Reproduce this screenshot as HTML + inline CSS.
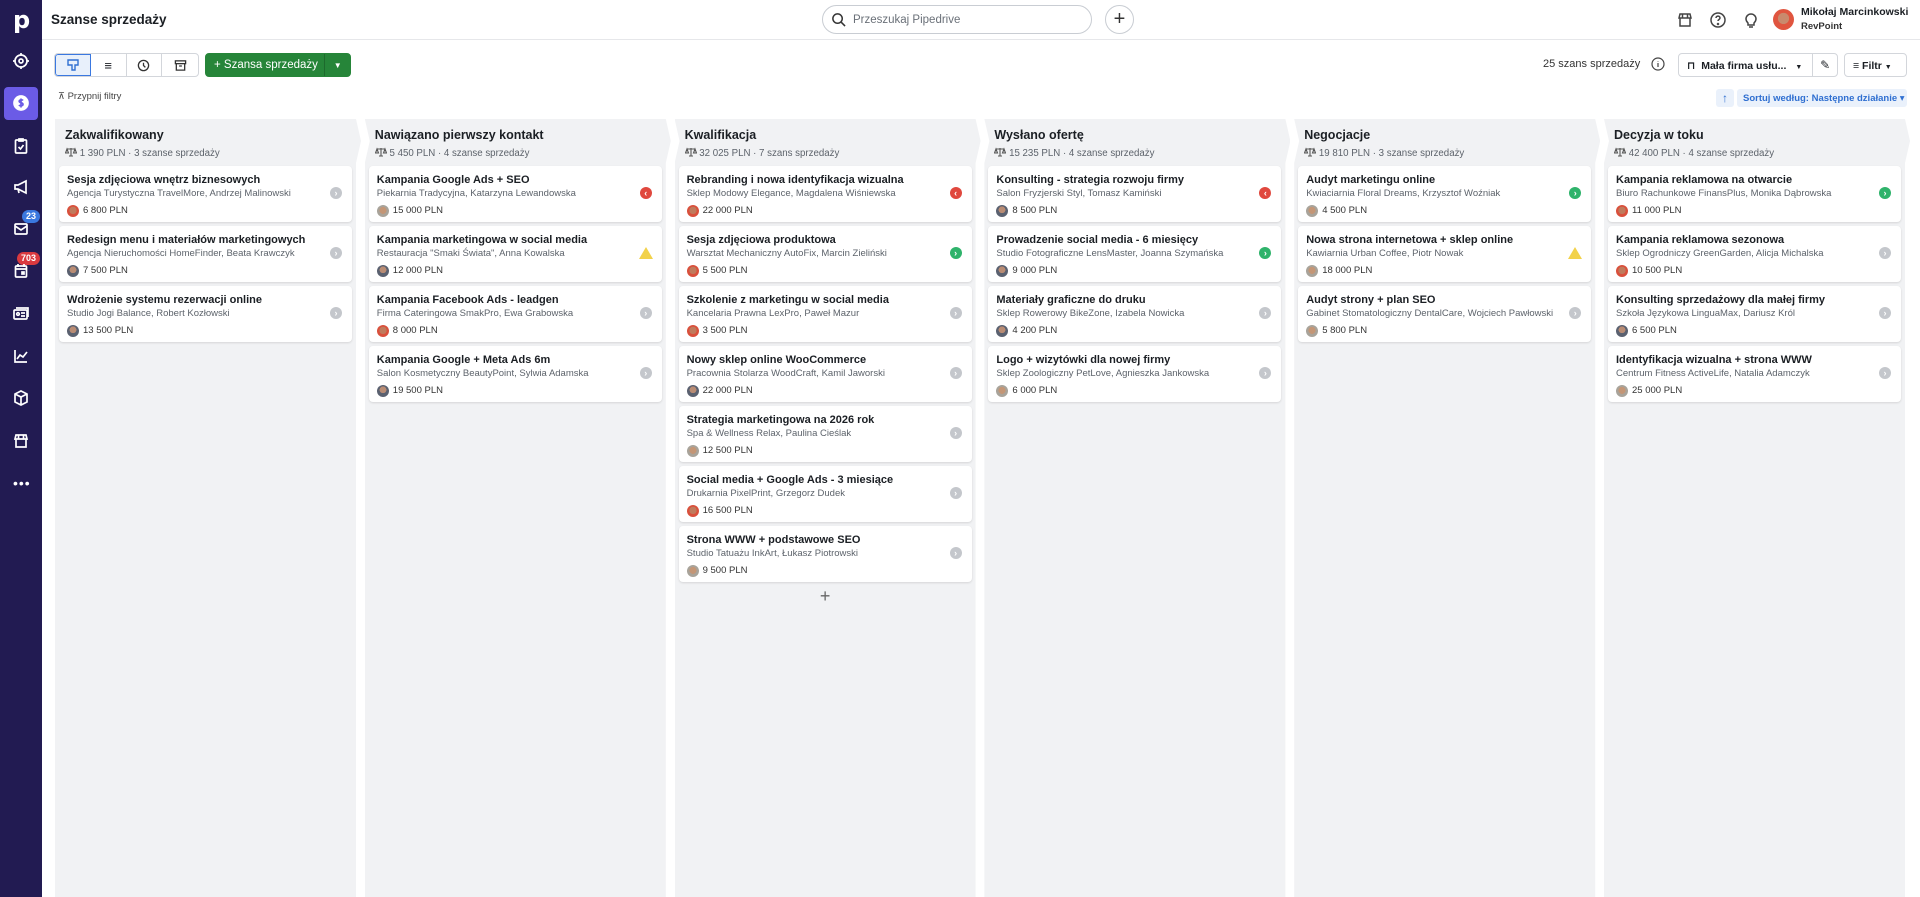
<!DOCTYPE html>
<html><head><meta charset="utf-8">
<style>
*{box-sizing:border-box;margin:0;padding:0}
body{width:1920px;height:897px;overflow:hidden;background:#fff;font-family:"Liberation Sans","DejaVu Sans",sans-serif;color:#1b1f24;position:relative}
.side{position:absolute;left:0;top:0;width:42px;height:897px;background:#221b52}
.si{position:absolute;left:0;width:42px;display:flex;justify-content:center;align-items:center;height:30px}
.si svg{width:18px;height:18px;stroke:#fff;fill:none;stroke-width:1.7}
.active{position:absolute;left:4px;top:87px;width:34px;height:33px;background:#6b5be6;border-radius:4px}
.badge{position:absolute;color:#fff;font-size:9px;font-weight:bold;border-radius:8px;padding:1px 4px;line-height:11px}
.top{position:absolute;left:42px;top:0;right:0;height:40px;border-bottom:1px solid #e6e7ea}
.title{position:absolute;left:51px;top:12px;font-size:13.5px;font-weight:bold;color:#1b1f24}
.search{position:absolute;left:822px;top:5px;width:270px;height:29px;border:1px solid #c9cdd3;border-radius:15px;font-size:11.5px;color:#6a7078;padding:8px 0 0 30px}
.plus{position:absolute;left:1105px;top:5px;width:29px;height:29px;border:1px solid #c9cdd3;border-radius:50%;text-align:center;font-size:20px;line-height:26px;color:#333}
.btn{position:absolute;border:1px solid #d3d6db;border-radius:4px;height:24px;top:53px;background:#fff;font-size:11px;white-space:nowrap}
.card{background:#fff;border-radius:4px;height:56px;margin-bottom:4px;position:relative;box-shadow:0 1px 2px rgba(0,0,0,.12);padding:7px 0 0 8px}
.card .t{font-size:11px;font-weight:bold;color:#1b1f24;white-space:nowrap;line-height:14px}
.card .s{font-size:9.5px;color:#5d636b;white-space:nowrap;margin-top:1px;line-height:12px}
.card .p{font-size:9.5px;color:#333;margin-top:5px;display:flex;align-items:center;line-height:12px}
.av{width:12px;height:12px;border-radius:50%;margin-right:4px;display:inline-block}
.st{position:absolute;right:10px;top:21px;width:12px;height:12px;border-radius:50%;color:#fff;font-size:9px;line-height:12px;text-align:center;font-weight:bold}
.g{background:#c4c7cc}.r{background:#e0483e}.gr{background:#2fb36b}
.tri{position:absolute;right:9px;top:21px;width:0;height:0;border-left:7px solid transparent;border-right:7px solid transparent;border-bottom:12px solid #f2d24b}
.col{position:absolute;top:119px;width:306px;height:778px;background:#f1f2f4}
.col h2{position:absolute;left:10px;top:9px;font-size:12.5px;font-weight:bold;color:#1b1f24}
.col .sum{position:absolute;left:10px;top:28px;font-size:9.7px;color:#5d636b}
.cards{position:absolute;left:4px;top:47px;width:293px}
.addc{text-align:center;font-size:18px;color:#666;margin-top:2px}
</style></head><body>
<div class="side">
 <div style="position:absolute;left:13px;top:6px;color:#fff;font-size:24px;font-weight:bold;font-family:'DejaVu Sans',sans-serif">p</div>
 <div class="si" style="top:46px"><svg viewBox="0 0 18 18"><circle cx="9" cy="9" r="6"/><circle cx="9" cy="9" r="2"/><path d="M9 1v2M9 15v2M1 9h2M15 9h2"/></svg></div>
 <div class="active"></div>
 <div class="si" style="top:88px"><svg viewBox="0 0 18 18"><circle cx="9" cy="9" r="7" fill="#fff" stroke="#fff"/><path d="M11 6.5c-.5-.8-3.8-1-3.8.8s3.8 1 3.8 3-3.3 1.8-4 .7M9 4.5v9" stroke="#6b5be6"/></svg></div>
 <div class="si" style="top:131px"><svg viewBox="0 0 18 18"><rect x="3.5" y="3" width="11" height="13" rx="1"/><path d="M7 2h4v2H7zM6.5 10l2 2 3-4"/></svg></div>
 <div class="si" style="top:172px"><svg viewBox="0 0 18 18"><path d="M3 7h3l8-4v12l-8-4H3zM6 11l1 4"/></svg></div>
 <div class="badge" style="left:22px;top:210px;background:#3a78e0">23</div>
 <div class="si" style="top:214px"><svg viewBox="0 0 18 18"><rect x="3" y="4" width="12" height="10" rx="1"/><path d="M3 6l6 4 6-4"/></svg></div>
 <div class="badge" style="left:17px;top:252px;background:#d9393f">703</div>
 <div class="si" style="top:256px"><svg viewBox="0 0 18 18"><rect x="3.5" y="4" width="11" height="11" rx="1"/><path d="M3.5 7h11M6 2v3M12 2v3"/><rect x="10" y="10" width="2" height="2" fill="#fff"/></svg></div>
 <div class="si" style="top:299px"><svg viewBox="0 0 18 18"><rect x="2" y="5" width="13" height="9" rx="1"/><path d="M4 3h12v9"/><circle cx="6" cy="9" r="1.3"/><path d="M9 8h4M9 11h4"/></svg></div>
 <div class="si" style="top:341px"><svg viewBox="0 0 18 18"><path d="M3 3v12h12M5 12l3-4 3 2 4-5"/></svg></div>
 <div class="si" style="top:383px"><svg viewBox="0 0 18 18"><path d="M9 2l6 3v8l-6 3-6-3V5zM3 5l6 3 6-3M9 8v8"/></svg></div>
 <div class="si" style="top:426px"><svg viewBox="0 0 18 18"><path d="M3 7l1-4h10l1 4zM4 7v8h10V7M6.5 3v4M11.5 3v4"/></svg></div>
 <div style="position:absolute;left:13px;top:475px;color:#fff;font-size:14px;letter-spacing:1px">•••</div>
</div>

<div class="top"></div>
<div class="title">Szanse sprzedaży</div>
<div class="search"><svg style="position:absolute;left:8px;top:6px" width="15" height="15" viewBox="0 0 16 16" fill="none" stroke="#333" stroke-width="1.6"><circle cx="7" cy="7" r="5"/><path d="M11 11l4 4"/></svg>Przeszukaj Pipedrive</div>
<div class="plus">+</div>
<svg style="position:absolute;left:1676px;top:11px" width="18" height="18" viewBox="0 0 18 18" fill="none" stroke="#444" stroke-width="1.5"><path d="M3 7l1-4h10l1 4zM4 7v8h10V7M6.5 3v4M11.5 3v4"/></svg>
<svg style="position:absolute;left:1709px;top:11px" width="18" height="18" viewBox="0 0 18 18" fill="none" stroke="#444" stroke-width="1.5"><circle cx="9" cy="9" r="7"/><path d="M7 7c0-2.5 4-2.5 4 0 0 1.5-2 1.5-2 3"/><circle cx="9" cy="13" r=".5"/></svg>
<svg style="position:absolute;left:1742px;top:11px" width="18" height="18" viewBox="0 0 18 18" fill="none" stroke="#444" stroke-width="1.5"><path d="M6 12c-1-1-2-2-2-4a5 5 0 0110 0c0 2-1 3-2 4v2H6zM7 16h4"/></svg>
<div style="position:absolute;left:1773px;top:9px;width:21px;height:21px;border-radius:50%;background:radial-gradient(circle at 50% 45%,#c98a6d 35%,#e0553f 37%)"></div>
<div style="position:absolute;left:1801px;top:6px;font-size:10.5px;font-weight:bold">Mikołaj Marcinkowski</div>
<div style="position:absolute;left:1801px;top:21px;font-size:9.5px;font-weight:bold;color:#333">RevPoint</div>

<!-- toolbar -->
<div class="btn" style="left:54px;width:145px;display:flex;overflow:hidden">
 <div style="width:36px;background:#e8f0fb;border:1px solid #3a78e0;border-radius:3px 0 0 3px;display:flex;align-items:center;justify-content:center"><svg width="14" height="14" viewBox="0 0 14 14" fill="none" stroke="#2f6fd1" stroke-width="1.4"><path d="M2 2h10v5H9v5H6V7H2z"/></svg></div>
 <div style="width:36px;border-right:1px solid #d3d6db;display:flex;align-items:center;justify-content:center;font-size:13px">≡</div>
 <div style="width:36px;border-right:1px solid #d3d6db;display:flex;align-items:center;justify-content:center"><svg width="13" height="13" viewBox="0 0 14 14" fill="none" stroke="#333" stroke-width="1.4"><circle cx="7" cy="7" r="5.5"/><path d="M7 4v3l2 2"/></svg></div>
 <div style="width:36px;display:flex;align-items:center;justify-content:center"><svg width="13" height="13" viewBox="0 0 14 14" fill="none" stroke="#333" stroke-width="1.4"><rect x="1.5" y="2" width="11" height="3"/><path d="M2.5 5v7h9V5M5.5 7.5h3"/></svg></div>
</div>
<div class="btn" style="left:205px;width:146px;background:#268539;border-color:#268539;color:#fff;display:flex">
 <div style="width:120px;padding:5px 0 0 8px;font-size:11.5px">+ Szansa sprzedaży</div>
 <div style="width:26px;border-left:1px solid #1d6a2d;text-align:center;font-size:8px;padding-top:7px">▼</div>
</div>
<div style="position:absolute;left:58px;top:91px;font-size:9.5px;color:#444">⊼ Przypnij filtry</div>

<div style="position:absolute;left:1543px;top:58px;font-size:11px;color:#333">25 szans sprzedaży</div>
<svg style="position:absolute;left:1651px;top:57px" width="14" height="14" viewBox="0 0 14 14" fill="none" stroke="#444" stroke-width="1.2"><circle cx="7" cy="7" r="6"/><path d="M7 6v4M7 4v.5"/></svg>
<div class="btn" style="left:1678px;width:160px;display:flex">
 <div style="width:135px;padding:6px 0 0 8px;font-weight:bold;font-size:10.5px">⊓&nbsp; Mała firma usłu... <span style="font-size:7px;margin-left:6px">▼</span></div>
 <div style="width:25px;border-left:1px solid #d3d6db;text-align:center;padding-top:4px;font-size:12px">✎</div>
</div>
<div class="btn" style="left:1844px;width:63px;padding:6px 0 0 8px;font-weight:bold;font-size:10.5px">≡ Filtr <span style="font-size:7px">▼</span></div>
<div style="position:absolute;left:1716px;top:89px;width:18px;height:18px;background:#eaf1fb;border-radius:3px;color:#2f6fd1;text-align:center;font-size:12px;line-height:18px">↑</div>
<div style="position:absolute;left:1737px;top:89px;width:170px;height:18px;background:#eaf1fb;border-radius:3px;color:#2f6fd1;font-size:9.5px;font-weight:bold;padding:4px 0 0 6px;white-space:nowrap">Sortuj według: Następne działanie ▾</div>

<div id="board"></div>
<script>
const cols=[
["Zakwalifikowany","1 390 PLN · 3 szanse sprzedaży",[
["Sesja zdjęciowa wnętrz biznesowych","Agencja Turystyczna TravelMore, Andrzej Malinowski","6 800 PLN","g","r"],
["Redesign menu i materiałów marketingowych","Agencja Nieruchomości HomeFinder, Beata Krawczyk","7 500 PLN","g","b"],
["Wdrożenie systemu rezerwacji online","Studio Jogi Balance, Robert Kozłowski","13 500 PLN","g","b"]]],
["Nawiązano pierwszy kontakt","5 450 PLN · 4 szanse sprzedaży",[
["Kampania Google Ads + SEO","Piekarnia Tradycyjna, Katarzyna Lewandowska","15 000 PLN","r","w"],
["Kampania marketingowa w social media","Restauracja \"Smaki Świata\", Anna Kowalska","12 000 PLN","y","b"],
["Kampania Facebook Ads - leadgen","Firma Cateringowa SmakPro, Ewa Grabowska","8 000 PLN","g","r"],
["Kampania Google + Meta Ads 6m","Salon Kosmetyczny BeautyPoint, Sylwia Adamska","19 500 PLN","g","b"]]],
["Kwalifikacja","32 025 PLN · 7 szans sprzedaży",[
["Rebranding i nowa identyfikacja wizualna","Sklep Modowy Elegance, Magdalena Wiśniewska","22 000 PLN","r","r"],
["Sesja zdjęciowa produktowa","Warsztat Mechaniczny AutoFix, Marcin Zieliński","5 500 PLN","gr","r"],
["Szkolenie z marketingu w social media","Kancelaria Prawna LexPro, Paweł Mazur","3 500 PLN","g","r"],
["Nowy sklep online WooCommerce","Pracownia Stolarza WoodCraft, Kamil Jaworski","22 000 PLN","g","b"],
["Strategia marketingowa na 2026 rok","Spa & Wellness Relax, Paulina Cieślak","12 500 PLN","g","w"],
["Social media + Google Ads - 3 miesiące","Drukarnia PixelPrint, Grzegorz Dudek","16 500 PLN","g","r"],
["Strona WWW + podstawowe SEO","Studio Tatuażu InkArt, Łukasz Piotrowski","9 500 PLN","g","w"]]],
["Wysłano ofertę","15 235 PLN · 4 szanse sprzedaży",[
["Konsulting - strategia rozwoju firmy","Salon Fryzjerski Styl, Tomasz Kamiński","8 500 PLN","r","b"],
["Prowadzenie social media - 6 miesięcy","Studio Fotograficzne LensMaster, Joanna Szymańska","9 000 PLN","gr","b"],
["Materiały graficzne do druku","Sklep Rowerowy BikeZone, Izabela Nowicka","4 200 PLN","g","b"],
["Logo + wizytówki dla nowej firmy","Sklep Zoologiczny PetLove, Agnieszka Jankowska","6 000 PLN","g","w"]]],
["Negocjacje","19 810 PLN · 3 szanse sprzedaży",[
["Audyt marketingu online","Kwiaciarnia Floral Dreams, Krzysztof Woźniak","4 500 PLN","gr","w"],
["Nowa strona internetowa + sklep online","Kawiarnia Urban Coffee, Piotr Nowak","18 000 PLN","y","w"],
["Audyt strony + plan SEO","Gabinet Stomatologiczny DentalCare, Wojciech Pawłowski","5 800 PLN","g","w"]]],
["Decyzja w toku","42 400 PLN · 4 szanse sprzedaży",[
["Kampania reklamowa na otwarcie","Biuro Rachunkowe FinansPlus, Monika Dąbrowska","11 000 PLN","gr","r"],
["Kampania reklamowa sezonowa","Sklep Ogrodniczy GreenGarden, Alicja Michalska","10 500 PLN","g","r"],
["Konsulting sprzedażowy dla małej firmy","Szkoła Językowa LinguaMax, Dariusz Król","6 500 PLN","g","b"],
["Identyfikacja wizualna + strona WWW","Centrum Fitness ActiveLife, Natalia Adamczyk","25 000 PLN","g","w"]]]];
const av={r:"radial-gradient(circle at 50% 45%,#c07a5c 40%,#d9503c 42%)",b:"radial-gradient(circle at 50% 40%,#b98c74 35%,#5a6170 37%)",w:"radial-gradient(circle at 50% 45%,#c49676 38%,#a8a39a 40%)"};
let h="";
cols.forEach((c,i)=>{
 const x=55+i*309.8, W=301;
 h+=`<div class="col" style="left:${x}px;clip-path:polygon(0 0,${W}px 0,${W+5}px 22px,${W}px 44px,${W}px 100%,0 100%${i?",0 44px,5px 22px":""})"><h2>${c[0]}</h2><div class="sum"><svg width="12" height="10" viewBox="0 0 12 10" fill="none" stroke="#555" stroke-width="1.1" style="vertical-align:-1px"><path d="M6 1v8M2 2h8M2 2l-1.5 4h3zM10 2l-1.5 4h3zM4 9h4"/></svg> ${c[1]}</div><div class="cards">`;
 c[2].forEach(d=>{
  const s=d[3]=="y"?'<div class="tri"></div>':`<div class="st ${d[3]}">${d[3]=="r"?"‹":"›"}</div>`;
  h+=`<div class="card"><div class="t">${d[0]}</div><div class="s">${d[1]}</div><div class="p"><span class="av" style="background:${av[d[4]]}"></span>${d[2]}</div>${s}</div>`;
 });
 if(i==2)h+='<div class="addc">+</div>';
 h+='</div></div>';
});
document.getElementById("board").innerHTML=h;
</script>
</body></html>
